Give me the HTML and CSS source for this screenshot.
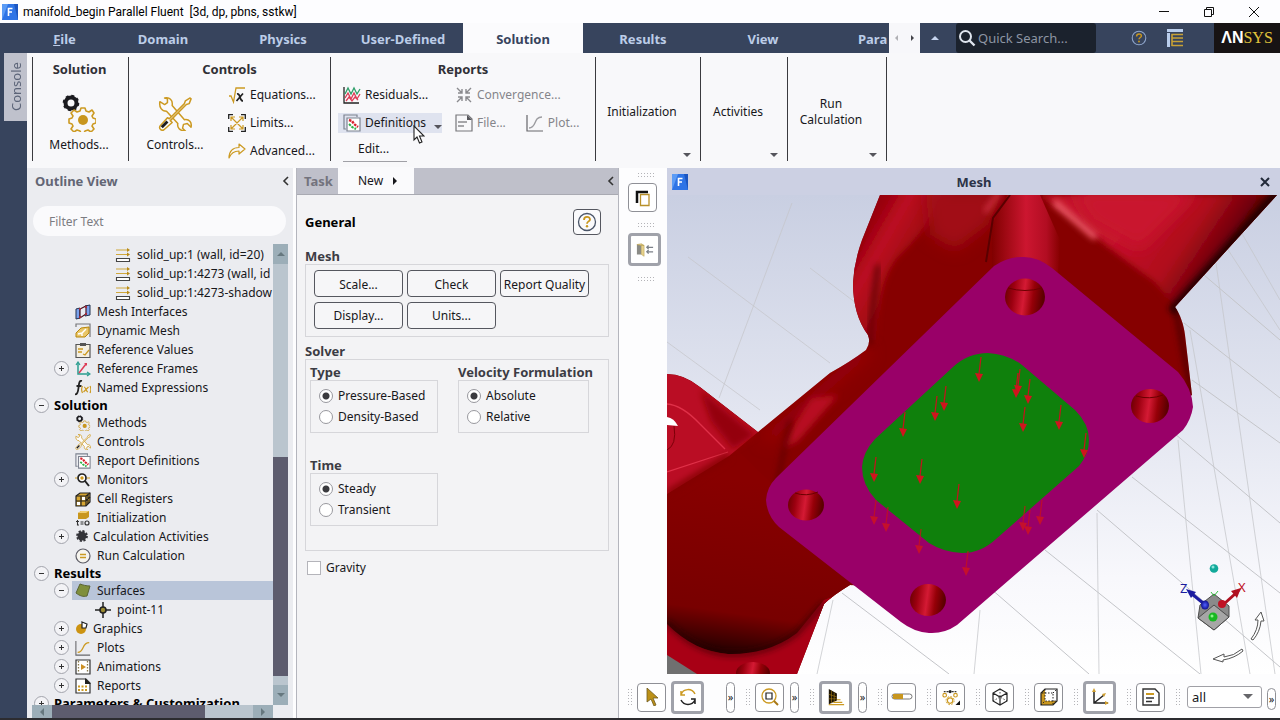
FILE: index.html
```html
<!DOCTYPE html>
<html lang="en">
<head>
<meta charset="utf-8">
<title>manifold_begin Parallel Fluent</title>
<link rel="stylesheet" href="styles.css">
</head>
<body>
<svg class="defs" aria-hidden="true">
  <symbol id="fluent" viewBox="0 0 16 16"><path d="M0 0h16v16H0z" fill="#2e74e6"/><path d="M0 16L6 0H0z" fill="#5b9bf5"/><path d="M16 16L12 0h4z" fill="#1c56c0"/><path d="M6.500 12V4.500h4M6.500 8h3.500" stroke="#fff" stroke-width="1.600" fill="none"/></symbol>
  <symbol id="gears" viewBox="0 0 34 38"><circle cx="9" cy="9" r="5.500" fill="none" stroke="#1b1b1f" stroke-width="4"/><circle cx="9" cy="9" r="7.500" fill="none" stroke="#1b1b1f" stroke-width="1.600" stroke-dasharray="3 2.900"/><path d="M19 14h4l1 3 3 1 3-2 2 3-2 3 1 2 3 1v4l-3 1-1 2 2 3-3 3-3-2-3 1-1 2h-3l-1-2-3-1-3 2-3-3 2-3-1-2-3-1v-4l3-1 1-2-2-3 3-3 3 2 3-1z" fill="none" stroke="#cc9a22" stroke-width="1.600" stroke-linejoin="round"/><circle cx="21" cy="26" r="5" fill="#c8961e"/></symbol>
  <symbol id="tools" viewBox="0 0 36 36"><g fill="#fbfbfc" stroke="#cc9a22" stroke-width="1.600" stroke-linejoin="round"><path d="M2 5l5 3 3-2V2l-3-1c5-1 9 2 8 8l13 15c5-1 8 3 7 8l-4-4-4 1-1 4 3 3c-6 0-9-4-8-8L9 15c-5 0-8-4-7-10z"/><path d="M29 4l5-3 1 1-2 5-3 1L13 25l2 2-9 8c-3 1-5-2-4-4l8-9 2 1L28 7z"/></g><path d="M4 32l6-6" stroke="#1b1b1f" stroke-width="3"/></symbol>
  <symbol id="eq" viewBox="0 0 18 16"><path d="M1 9l2 0 2.500 6L8 1h9" fill="none" stroke="#cc9a22" stroke-width="1.300"/><path d="M9 7c4-1 2 7 6 7M15 6.500L8.500 14" stroke="#222" stroke-width="1.700" fill="none"/></symbol>
  <symbol id="limits" viewBox="0 0 18 18"><path d="M.7 5V.7H5M13 .7h4.300V5M17.300 13v4.300H13M5 17.300H.7V13" fill="none" stroke="#222" stroke-width="1.300"/><path d="M3 3l12 12M15 3L3 15M3 7V3h4M11 3h4v4M15 11v4h-4M7 15H3v-4" fill="none" stroke="#cc9a22" stroke-width="1.200"/></symbol>
  <symbol id="adv" viewBox="0 0 18 16"><path d="M1 15C1 8 5 4.500 11 4.500V1l6 5-6 5V8C7 8 3 10 1 15z" fill="none" stroke="#cc9a22" stroke-width="1.200" stroke-linejoin="round"/></symbol>
  <symbol id="resid" viewBox="0 0 18 18"><path d="M1 1v16h15" fill="none" stroke="#222" stroke-width="1.300"/><path d="M2 8l3-6 3 6 3-6 3 6 3-5" fill="none" stroke="#2f9f6a" stroke-width="1.300"/><path d="M2 12l3-5 3 6 3-6 3 6 3-5M3 15l3-4 3 4 3-4 3 3" fill="none" stroke="#dd3b56" stroke-width="1.300"/></symbol>
  <symbol id="defn" viewBox="0 0 18 18"><path d="M3 15H1V1h13v2" fill="none" stroke="#7d8390" stroke-width="1.200"/><path d="M4 4h13v13H4z" fill="#fff" stroke="#7d8390" stroke-width="1.200"/><path d="M6 6l3 1 2 3 4 3" fill="none" stroke="#d8202c" stroke-width="2.400" stroke-dasharray="2.500 1"/><path d="M6 10l3 3 4 2" fill="none" stroke="#2fb24a" stroke-width="2" stroke-dasharray="2.500 1"/></symbol>
  <symbol id="conv" viewBox="0 0 18 18"><path d="M2 2l5 5M16 2l-5 5M2 16l5-5M16 16l-5-5M7 3v4H3M11 3v4h4M7 15v-4H3M11 15v-4h4" fill="none" stroke="#8a8a8e" stroke-width="1.400"/></symbol>
  <symbol id="file" viewBox="0 0 18 18"><path d="M1 1h12l4 4v12H1z" fill="none" stroke="#77777b" stroke-width="1.200"/><path d="M12 1l5 5h-5z" fill="#55555a"/><path d="M3 8h9M3 12h6" stroke="#8a8a8e" stroke-width="1.600"/></symbol>
  <symbol id="plot" viewBox="0 0 18 18"><path d="M1 1v16h16" fill="none" stroke="#66666a" stroke-width="1.200"/><path d="M3 14c8 0 4-11 13-11" fill="none" stroke="var(--curve, #9c9ca0)" stroke-width="1.400"/></symbol>
  <symbol id="wall" viewBox="0 0 16 16"><path d="M1 3h12M1 7.500h12" stroke="#d0a83c" stroke-width="1.200"/><path d="M12 1l3 2-3 2zM12 5.500l3 2-3 2z" fill="#b98a15"/><path d="M1.500 11.500h13v3h-13z" fill="#fff" stroke="#444" stroke-width="1.100"/></symbol>
  <symbol id="mesh" viewBox="0 0 16 16"><path d="M1 5l4-1v10l-4 1zM10 2l5-1v10l-5 1z" fill="#7aa2ee" stroke="#23324f"/><path d="M5 5l6-3v8l-6 4z" fill="#e8eaf2" stroke="#4a1420" stroke-width="1.200"/><path d="M4 4h2v2H4zM10 2h2v2h-2zM4 12h2v2H4zM10 9h2v2h-2z" fill="#a32c3c"/></symbol>
  <symbol id="dyn" viewBox="0 0 16 16"><path d="M1 4V1h14v13" fill="none" stroke="#77777a" stroke-width="1.200"/><path d="M1 10l5-5 8-1v6l-4 4H1z" fill="#e9c668" stroke="#b8860b"/><path d="M3 11l4-1 4-4M7 10v3" stroke="#fff" stroke-width="1.400" fill="none"/></symbol>
  <symbol id="clip" viewBox="0 0 16 16"><path d="M1 2.500h14v13H1z" fill="#f4efe2" stroke="#555" stroke-width="1.200"/><path d="M5 1h6v3H5z" fill="#555"/><path d="M3 7h5M3 10h4M8 12l2 1 4-5" fill="none" stroke="#cc9a22" stroke-width="1.300"/></symbol>
  <symbol id="frames" viewBox="0 0 16 16"><path d="M3 2v11h11" fill="none" stroke="#2a9d8f" stroke-width="1.500"/><path d="M1 4l2-3 2 3M12 11l3 2-3 2" fill="none" stroke="#2a9d8f" stroke-width="1.200"/><path d="M4 12l7-9" stroke="#dd3b56" stroke-width="1.500"/><path d="M9 2h3v3z" fill="#dd3b56"/></symbol>
  <symbol id="fx" viewBox="0 0 16 16"><path d="M7 1C4 0 4 4 3.500 8S2 15 0 14M1.500 6h5" fill="none" stroke="#222" stroke-width="1.800"/><path d="M7.500 6c-1 2-1 5 0 7M15 6c1 2 1 5 0 7M9 7c2 0 2 5 4 5M13.500 7l-5 5" fill="none" stroke="#cc9a22" stroke-width="1.200"/></symbol>
  <symbol id="mon" viewBox="0 0 16 16"><circle cx="7" cy="6" r="4" fill="#fff" stroke="#222" stroke-width="1.700"/><circle cx="7" cy="6" r="1.700" fill="#d09a1c"/><path d="M10 9l4 5" stroke="#222" stroke-width="2"/><path d="M0 6h2M12 6h3" stroke="#d09a1c"/></symbol>
  <symbol id="cell" viewBox="0 0 16 16"><path d="M1 5l4-3h10v9l-4 4H1z" fill="#d7a632" stroke="#222" stroke-width="1.200"/><path d="M1 5h10v10M11 5l4-3M1 10h10l4-4M6 5v10M13 4v9" fill="none" stroke="#222" stroke-width="1.200"/><path d="M7 6h3v3H7zM2 11h3v3H2z" fill="#fff"/></symbol>
  <symbol id="init" viewBox="0 0 16 16"><path d="M3 3l3-2h8v6l-3 2H3z" fill="#c8961e"/><path d="M3 3h8l3-2H6z" fill="#f0cd70"/><path d="M2.500 10v5h1.500M1 11.500h3M5.500 12h3M5.500 14h3" stroke="#333" stroke-width="1.100" fill="none"/><circle cx="12" cy="13" r="2" fill="none" stroke="#333" stroke-width="1.200"/></symbol>
  <symbol id="calc" viewBox="0 0 16 16"><circle cx="7" cy="7" r="4.500" fill="#333338"/><circle cx="7" cy="7" r="5" fill="none" stroke="#333338" stroke-width="1.800" stroke-dasharray="2.200 1.700"/></symbol>
  <symbol id="run" viewBox="0 0 16 16"><circle cx="8" cy="8" r="7" fill="#f6f4ee" stroke="#5c5c66" stroke-width="1.200"/><path d="M5 6.500h6M5 9.500h6" stroke="#cc9a22" stroke-width="1.600"/></symbol>
  <symbol id="surf" viewBox="0 0 16 16"><path d="M5 1c3 1 6 2 10 2l-3 10c-4 1-7 0-11-3z" fill="#7f8f3c" stroke="#5a6435"/></symbol>
  <symbol id="point" viewBox="0 0 16 16"><circle cx="8" cy="8" r="3" fill="#9a8a30" stroke="#222" stroke-width="1.600"/><path d="M8 0v5M8 11v5M0 8h5M11 8h5" stroke="#222" stroke-width="1.500"/></symbol>
  <symbol id="gfx" viewBox="0 0 16 16"><circle cx="6" cy="8" r="5" fill="#cc9312"/><path d="M7 1l5 2-1 4H7z" fill="#fff" stroke="#222" stroke-width="1.200"/></symbol>
  <symbol id="anim" viewBox="0 0 16 16"><path d="M1 1h14v14H1z" fill="#fff" stroke="#333" stroke-width="1.200"/><path d="M3.500 2v12M12.500 2v12" stroke="#8a7a4a" stroke-width="1.300" stroke-dasharray="1.500 1.500"/><path d="M6 5l5 3-5 3z" fill="#cc8f22"/></symbol>
  <symbol id="rep" viewBox="0 0 16 16"><path d="M1 1h10l4 4v10H1z" fill="#fff" stroke="#333" stroke-width="1.200"/><path d="M10 0l6 6h-6z" fill="#222"/><path d="M3 8.500h10M3 12h10" stroke="#cc9a22" stroke-width="2" stroke-dasharray="2 1.500"/></symbol>
  <symbol id="help" viewBox="0 0 20 20"><circle cx="10" cy="10" r="8.500" fill="none" stroke="var(--ring, #4a5568)" stroke-width="1.300"/><path d="M7 8c0-4 6-4 6-.6 0 2-3 2-3 4.300" fill="none" stroke="#c8961e" stroke-width="1.800"/><circle cx="10" cy="14.300" r="1.200" fill="#c8961e"/></symbol>
</svg>

<header class="titlebar">
  <svg class="app-icon"><use href="#fluent"/></svg>
  <h1 class="title">manifold_begin Parallel Fluent&nbsp; [3d, dp, pbns, sstkw]</h1>
  <button class="win" aria-label="Minimize"><svg viewBox="0 0 12 12"><path d="M1 5.500h10" stroke="#111"/></svg></button>
  <button class="win" aria-label="Restore"><svg viewBox="0 0 12 12"><path d="M1.500 3.500h7v7h-7zM3.500 3.500v-2h7v7h-2" fill="none" stroke="#111"/></svg></button>
  <button class="win" aria-label="Close"><svg viewBox="0 0 12 12"><path d="M1 1l10 10M11 1L1 11" stroke="#111"/></svg></button>
</header>

<nav class="menubar">
  <button class="tab tab-file"><u>F</u>ile</button>
  <button class="tab">Domain</button>
  <button class="tab">Physics</button>
  <button class="tab">User-Defined</button>
  <button class="tab tab-on">Solution</button>
  <button class="tab">Results</button>
  <button class="tab">View</button>
  <button class="tab tab-cut">Para</button>
  <div class="tab-scroll"><button aria-label="Scroll left"><i class="tri left"></i></button><button aria-label="Scroll right"><i class="tri right"></i></button></div>
  <button class="collapse" aria-label="Collapse ribbon"><i class="tri up"></i></button>
  <label class="search"><svg viewBox="0 0 18 18"><circle cx="7.500" cy="7.500" r="5.500" fill="none" stroke="#dfe5ee" stroke-width="2"/><path d="M11.500 11.500l5 5" stroke="#dfe5ee" stroke-width="2.400"/></svg><input type="text" placeholder="Quick Search..." aria-label="Quick Search"></label>
  <button class="bar-btn help-top" aria-label="Help"><svg viewBox="0 0 20 20"><use href="#help"/></svg></button>
  <button class="bar-btn layout-top" aria-label="Layout"><svg viewBox="0 0 16 18"><path d="M0 0h16v3H0zM0 4h3v14H0z" fill="#b9cdeb"/><path d="M4.500 5.500H16M4.500 9H16M4.500 12.500H16M4.500 16.500H16M5 5v12" stroke="#c8a136" stroke-width="1.600"/></svg></button>
  <div class="brand"><b>ΛN</b><span>SYS</span></div>
</nav>

<div class="main">
  <aside class="rail"><button class="console">Console</button></aside>
  <div class="content">
    <section class="ribbon">
      <div class="group">
        <h2>Solution</h2>
        <button class="big"><svg viewBox="0 0 34 38"><use href="#gears"/></svg>Methods...</button>
      </div>
      <div class="group">
        <h2>Controls</h2>
        <div class="controls">
          <button class="big"><svg viewBox="0 0 36 36"><use href="#tools"/></svg>Controls...</button>
          <div class="list">
            <button class="cmd"><svg><use href="#eq"/></svg>Equations...</button>
            <button class="cmd"><svg><use href="#limits"/></svg>Limits...</button>
            <button class="cmd"><svg><use href="#adv"/></svg>Advanced...</button>
          </div>
        </div>
      </div>
      <div class="group">
        <h2>Reports</h2>
        <div class="reports">
          <button class="cmd"><svg><use href="#resid"/></svg>Residuals...</button>
          <button class="cmd off" disabled><svg><use href="#conv"/></svg>Convergence...</button>
          <div class="drop">
            <button class="cmd cmd-on"><svg><use href="#defn"/></svg>Definitions<i class="tri down"></i></button>
            <div class="menu">
              <button class="menu-edit">Edit...</button>
              <button class="menu-new">New<i class="tri right"></i></button>
            </div>
            <svg class="cursor" viewBox="0 0 12 19"><path d="M1 1v14l3-3 2.500 6 2.500-1-2.500-6H11z" fill="#fff" stroke="#222" stroke-width="1.100"/></svg>
          </div>
          <div class="pair">
            <button class="cmd off" disabled><svg><use href="#file"/></svg>File...</button>
            <button class="cmd off" disabled><svg><use href="#plot"/></svg>Plot...</button>
          </div>
        </div>
      </div>
      <div class="group"><button class="wide">Initialization<i class="tri down"></i></button></div>
      <div class="group"><button class="wide">Activities<i class="tri down"></i></button></div>
      <div class="group"><button class="wide">Run<br>Calculation<i class="tri down"></i></button></div>
      <div class="group"></div>
    </section>

    <div class="work">
      <section class="outline">
        <header class="outline-head"><h2>Outline View</h2><button class="fold" aria-label="Collapse"><svg viewBox="0 0 8 10"><path d="M6 1L2 5l4 4" fill="none" stroke="#333" stroke-width="1.600"/></svg></button></header>
        <input class="filter" type="text" placeholder="Filter Text" aria-label="Filter Text">
        <div class="tree-wrap">
          <ul class="tree">
            <li class="deep"><svg><use href="#wall"/></svg>solid_up:1 (wall, id=20)</li>
            <li class="deep"><svg><use href="#wall"/></svg>solid_up:1:4273 (wall, id</li>
            <li class="deep"><svg><use href="#wall"/></svg>solid_up:1:4273-shadow</li>
            <li><span class="no"></span><svg><use href="#mesh"/></svg>Mesh Interfaces</li>
            <li><span class="no"></span><svg><use href="#dyn"/></svg>Dynamic Mesh</li>
            <li><span class="no"></span><svg><use href="#clip"/></svg>Reference Values</li>
            <li><button class="exp plus" aria-label="Expand"></button><svg><use href="#frames"/></svg>Reference Frames</li>
            <li><span class="no"></span><svg><use href="#fx"/></svg>Named Expressions</li>
            <li class="sec"><button class="exp" aria-label="Collapse"></button>Solution</li>
            <li><span class="no"></span><svg viewBox="0 0 34 38"><use href="#gears"/></svg>Methods</li>
            <li><span class="no"></span><svg viewBox="0 0 36 36"><use href="#tools"/></svg>Controls</li>
            <li><span class="no"></span><svg><use href="#defn"/></svg>Report Definitions</li>
            <li><button class="exp plus" aria-label="Expand"></button><svg><use href="#mon"/></svg>Monitors</li>
            <li><span class="no"></span><svg><use href="#cell"/></svg>Cell Registers</li>
            <li><span class="no"></span><svg><use href="#init"/></svg>Initialization</li>
            <li class="tight"><button class="exp plus" aria-label="Expand"></button><svg><use href="#calc"/></svg>Calculation Activities</li>
            <li><span class="no"></span><svg><use href="#run"/></svg>Run Calculation</li>
            <li class="sec"><button class="exp" aria-label="Collapse"></button>Results</li>
            <li class="sel"><button class="exp" aria-label="Collapse"></button><svg><use href="#surf"/></svg>Surfaces</li>
            <li class="sub"><svg><use href="#point"/></svg>point-11</li>
            <li class="tight"><button class="exp plus" aria-label="Expand"></button><svg><use href="#gfx"/></svg>Graphics</li>
            <li class="gold"><button class="exp plus" aria-label="Expand"></button><svg><use href="#plot"/></svg>Plots</li>
            <li><button class="exp plus" aria-label="Expand"></button><svg><use href="#anim"/></svg>Animations</li>
            <li><button class="exp plus" aria-label="Expand"></button><svg><use href="#rep"/></svg>Reports</li>
            <li class="sec"><button class="exp plus" aria-label="Expand"></button>Parameters &amp; Customization</li>
          </ul>
          <div class="vbar"><span class="cap"><i class="tri up"></i></span><span class="track"></span><span class="thumb"></span><span class="rest"></span><span class="cap"><i class="tri down"></i></span></div>
          <div class="hbar"><span class="cap"><i class="tri left"></i></span><span class="thumb"></span><span class="track"></span><span class="cap"><i class="tri right"></i></span></div>
        </div>
      </section>

      <section class="task">
        <header class="task-head"><h2>Task</h2><button class="fold" aria-label="Collapse"><svg viewBox="0 0 8 10"><path d="M6 1L2 5l4 4" fill="none" stroke="#333" stroke-width="1.600"/></svg></button></header>
        <form class="task-body">
          <div class="general"><h3>General</h3><button type="button" class="help-btn" aria-label="Help"><svg viewBox="0 0 20 20"><use href="#help"/></svg></button></div>
          <h4>Mesh</h4>
          <div class="box mesh-box">
            <button type="button">Scale...</button><button type="button">Check</button><button type="button">Report Quality</button>
            <button type="button">Display...</button><button type="button">Units...</button>
          </div>
          <h4 class="solver-title">Solver</h4>
          <div class="box solver-box">
            <fieldset><legend>Type</legend><div class="box opts">
              <label><input type="radio" name="type" checked>Pressure-Based</label>
              <label><input type="radio" name="type">Density-Based</label></div></fieldset>
            <fieldset><legend>Velocity Formulation</legend><div class="box opts">
              <label><input type="radio" name="vel" checked>Absolute</label>
              <label><input type="radio" name="vel">Relative</label></div></fieldset>
            <fieldset><legend>Time</legend><div class="box opts">
              <label><input type="radio" name="time" checked>Steady</label>
              <label><input type="radio" name="time">Transient</label></div></fieldset>
          </div>
          <label class="gravity"><input type="checkbox">Gravity</label>
        </form>
      </section>

      <section class="view">
        <div class="side">
          <i class="dots flat"></i>
          <button class="tool" aria-label="Copy view"><svg viewBox="0 0 18 18"><path d="M3 14V3h11" fill="none" stroke="#111" stroke-width="2.500"/><path d="M6.500 5.500h8.500v11H6.500z" fill="#fff" stroke="#b8902a" stroke-width="1.300"/></svg></button>
          <i class="dots flat"></i>
          <button class="tool on" aria-label="Toggle panel"><svg viewBox="0 0 20 18"><path d="M1 3h5v11H1z" fill="#8b8b86"/><path d="M6 3l3 1v12l-3-2zM1 3l5-1 3 2H6z" fill="#e6d28c" stroke="#b8a052" stroke-width=".6"/><path d="M12 6h7M12 11h7M14 4l-2 2 2 2M14 9l-2 2 2 2" stroke="#7b8088" stroke-width="1.400" fill="none"/></svg></button>
          <i class="dots flat"></i>
        </div>
        <div class="mesh-window">
          <header class="mesh-head"><svg class="app-icon"><use href="#fluent"/></svg><h2>Mesh</h2><button aria-label="Close mesh window"><svg viewBox="0 0 10 10"><path d="M1 1l8 8M9 1L1 9" stroke="#222a3a" stroke-width="2"/></svg></button></header>
          <svg class="scene" viewBox="667 195 613 479" preserveAspectRatio="xMidYMid slice" role="img" aria-label="Manifold mesh">
            <defs>
              <linearGradient id="bg" x1="0" y1="0" x2="0" y2="1"><stop offset="0" stop-color="#c9cfe2"/><stop offset=".45" stop-color="#e2e5f0"/><stop offset=".8" stop-color="#f8f8fc"/><stop offset="1" stop-color="#fff"/></linearGradient>
              <linearGradient id="hole" x1="0" x2="1" y1="0" y2=".12"><stop offset="0" stop-color="#640000"/><stop offset=".25" stop-color="#9c0010"/><stop offset=".52" stop-color="#d41a34"/><stop offset=".75" stop-color="#960008"/><stop offset="1" stop-color="#5c0000"/></linearGradient>
              <linearGradient id="neck" x1="0" x2="1" y1="0" y2="0"><stop offset="0" stop-color="#800000"/><stop offset=".5" stop-color="#cc1630"/><stop offset=".8" stop-color="#b20d22"/><stop offset="1" stop-color="#860000"/></linearGradient>
              <linearGradient id="lobe" x1="855" y1="250" x2="925" y2="290" gradientUnits="userSpaceOnUse"><stop offset="0" stop-color="#98000c"/><stop offset=".25" stop-color="#bc0c22"/><stop offset="1" stop-color="#840000"/></linearGradient>
              <linearGradient id="wing" x1="1120" y1="230" x2="1210" y2="290" gradientUnits="userSpaceOnUse"><stop offset="0" stop-color="#c4122a"/><stop offset=".55" stop-color="#b00a1c"/><stop offset="1" stop-color="#560000"/></linearGradient>
              <linearGradient id="tube" x1="740" y1="480" x2="715" y2="655" gradientUnits="userSpaceOnUse"><stop offset="0" stop-color="#880000"/><stop offset=".75" stop-color="#780000"/><stop offset="1" stop-color="#1c0000"/></linearGradient>
              <radialGradient id="blue"><stop offset="0" stop-color="#5060ff"/><stop offset="1" stop-color="#101090"/></radialGradient>
              <filter id="s3" x="-30%" y="-30%" width="160%" height="160%"><feGaussianBlur stdDeviation="3"/></filter>
              <filter id="s8" x="-40%" y="-40%" width="180%" height="180%"><feGaussianBlur stdDeviation="8"/></filter>
              <clipPath id="body"><path d="M880 195H1277L1175 307C1180 314 1184 325 1185 335L1192 395L1130 440L920 590L850 585Q832 596 824 604L797 674H667V374Q684 374 700 387L758 432L830 373Q850 362 866 350Q871 343 868 335Q853 315 853 283Q854 262 862 240Z"/></clipPath>
              <g id="ar"><path d="M2-24L0-7" stroke="#c8101c" stroke-width="1.200"/><path d="M-4-8L4-7L0 1z" fill="#d0141e"/></g>
            </defs>
            <path d="M667 195h613v479H667z" fill="url(#bg)"/>
            <g stroke="#c4c5c9" fill="none">
              <path d="M688 257L830 363M667 342L760 410M810 268L856 303M792 203L719 398" opacity=".7"/><path d="M1204 275L1280 340M1184 323L1280 398M1192 380L1280 443M1174 433L1280 523M1132 477L1280 593M1097 510L1280 667M1045 550L1200 674M990 588L1089 674M842 593L949 674"/><path d="M1178 440L1201 674M1097 513L1099 674M980 610L974 674M833 600L817 674M1216 263L1275 674M1190 330L1250 674M1240 230L1280 300M1225 245L1280 330" opacity=".75"/>
            </g>
            <g clip-path="url(#body)">
              <path d="M667 195h613v479H667z" fill="#860000"/>
              <path d="M880 185H965L905 250Q878 270 876 340L860 340L845 285Z" fill="url(#lobe)" filter="url(#s3)"/>
              <path d="M925 190H1005L988 225L955 250L930 235Z" fill="#a10713" filter="url(#s8)"/>
              <path d="M1000 192L985 212" stroke="#d93648" stroke-width="4" filter="url(#s3)"/>
              <path d="M878 265Q872 310 870 345" stroke="#520000" stroke-width="4" fill="none" filter="url(#s3)"/>
              <path d="M1008 195H1040L1060 240L1058 275H992V225Z" fill="url(#neck)"/>
              <path d="M1010 195L993 218L986 262" stroke="#5a0000" stroke-width="2" fill="none"/>
              <path d="M1040 195H1290L1175 307L1155 282Q1110 250 1080 222Z" fill="url(#wing)" filter="url(#s3)"/>
              <path d="M1070 190H1200L1140 250L1090 222Z" fill="#c9152d" filter="url(#s8)"/>
              <path d="M1054 202L1096 238" stroke="#f4606e" stroke-width="6" filter="url(#s3)"/>
              <path d="M1280 190L1172 312" stroke="#240000" stroke-width="10" filter="url(#s3)"/>
              <path d="M1175 305L1192 395" stroke="#400000" stroke-width="4" filter="url(#s3)"/>
              <path d="M868 350L765 440" stroke="#9c0710" stroke-width="10" filter="url(#s8)"/>
              <path d="M812 398L838 395L798 441L784 448Q795 420 812 398Z" fill="#b80e22" filter="url(#s3)"/>
              <path d="M790 420L775 495" stroke="#520000" stroke-width="3" filter="url(#s3)"/>
              <path d="M660 470L735 448L850 560L852 590L797 640Q768 656 728 654Q690 650 660 622Z" fill="url(#tube)"/>
              <path d="M667 374Q684 374 700 387L758 432L729 456L667 494Z" fill="#ba0d24"/>
              <path d="M700 390L755 435L733 449L711 421Z" fill="#940008" filter="url(#s3)"/>
              <path d="M667 404Q682 405 700 424L725 449M667 472L728 452" stroke="#df3048" stroke-width="1.300" fill="none"/>
              <path d="M667 417Q674 418 678 426L667 425Z" fill="#fff"/>
              <path d="M674 426Q677 445 667 450" fill="none" stroke="#7c0008"/>
              <path d="M667 494L729 456" stroke="#820000" stroke-width="6" filter="url(#s3)"/>
              <path d="M667 624Q695 652 728 654Q768 655 797 633L824 600L850 590L800 674H667Z" fill="#a80015"/>
              <path d="M667 622Q695 652 728 654Q768 655 797 633L824 603" fill="none" stroke="#280000" stroke-width="3" filter="url(#s3)"/>
              <path d="M667 655L697 674H667Z" fill="#707070"/>
              <ellipse cx="753" cy="673" rx="17" ry="11" fill="url(#hole)"/>
            </g>
            <path d="M994 266Q1009 256 1024 257Q1038 257 1052 268L1178 372Q1192 388 1193 407Q1191 420 1183 430L957 625Q944 634 929 633Q914 632 901 622L779 527Q767 516 766 500Q767 487 776 478Z" fill="#990068"/>
            <path d="M953 367Q968 353 988 353Q1007 354 1022 365L1075 410Q1089 424 1089 440Q1089 454 1079 466L996 539Q981 553 962 553Q943 552 929 543L876 500Q862 485 862 467Q863 452 875 439Z" fill="#0f800c"/>
            <g fill="url(#hole)"><ellipse cx="1025" cy="297" rx="20" ry="18.500"/><ellipse cx="1150" cy="406" rx="19" ry="17"/><ellipse cx="806" cy="505" rx="18" ry="15.500"/><ellipse cx="928" cy="600" rx="18" ry="16"/></g>
            <path d="M1008 288Q1025 293 1042 288M1136 396Q1150 400 1163 395M795 493Q806 497 818 492" stroke="#6a0000" fill="none"/>
            <use href="#ar" x="979" y="381"/><use href="#ar" x="1016" y="397"/><use href="#ar" x="1018" y="393"/><use href="#ar" x="1028" y="403"/><use href="#ar" x="944" y="410"/><use href="#ar" x="935" y="420"/><use href="#ar" x="903" y="436"/><use href="#ar" x="1023" y="431"/><use href="#ar" x="1059" y="429"/><use href="#ar" x="1084" y="457"/><use href="#ar" x="874" y="481"/><use href="#ar" x="920" y="483"/><use href="#ar" x="957" y="508"/>
            <g opacity=".8"><use href="#ar" x="874" y="524"/><use href="#ar" x="886" y="531"/><use href="#ar" x="919" y="553"/><use href="#ar" x="966" y="575"/><use href="#ar" x="1023" y="530"/><use href="#ar" x="1028" y="534"/><use href="#ar" x="1040" y="524"/></g>
            <path d="M1214 594L1229 606V617L1214 630L1198 618L1200 605Z" fill="#8a8a8a" stroke="#4c4c4c"/><path d="M1214 605L1229 617L1214 630L1198 618Z" fill="#a6a6a6" stroke="#4c4c4c"/>
            <path d="M1203 603L1192 594" stroke="#1c1ca0" stroke-width="3"/><path d="M1186 589L1196 592L1191 598Z" fill="#1c1ca0"/><path d="M1225 603L1235 594" stroke="#b01020" stroke-width="3"/><path d="M1241 588L1231 591L1237 598Z" fill="#b01020"/>
            <ellipse cx="1205" cy="605" rx="4" ry="4.500" fill="url(#blue)"/><circle cx="1222" cy="604" r="4" fill="#c01224"/><circle cx="1213" cy="617" r="4.500" fill="#18b822"/><circle cx="1212" cy="616" r="1.500" fill="#8df58c"/><circle cx="1214" cy="568.500" r="4.300" fill="#12a99a"/><circle cx="1213" cy="567" r="1.500" fill="#8be5dc"/>
            <path d="M1211 592L1214 596L1218 591" stroke="#34c040" fill="none"/>
            <text class="axis-z" x="1180" y="593">Z</text><text class="axis-x" x="1238" y="592">X</text>
            <path d="M1251 639Q1258 630 1258 620H1255L1261 612L1264 621H1261Q1260 632 1253 640ZM1242 649Q1234 656 1224 657V654L1213 659L1223 662V660Q1235 658 1243 651Z" fill="#fff" stroke="#555"/>
          </svg>
        </div>
        <div class="toolbar">
          <i class="dots"></i>
          <button class="tool" aria-label="Select"><svg viewBox="0 0 18 18"><path d="M4 0v14l4-3 3 7 2-1-3-7h5z" fill="#bc9118" stroke="#6f5a20" stroke-width=".8"/></svg></button>
          <button class="tool on" aria-label="Rotate"><svg viewBox="0 0 18 18"><path d="M2 7C4 0 13 0 16 6M2 3v4h4" fill="none" stroke="#cc9a22" stroke-width="1.500"/><path d="M2 12c3 6 11 6 14 0M16 16v-5h-4" fill="none" stroke="#222" stroke-width="1.500"/></svg></button>
          <button class="pill first">»</button>
          <i class="dots"></i>
          <button class="tool" aria-label="Zoom"><svg viewBox="0 0 18 18"><circle cx="8" cy="8" r="7" fill="none" stroke="#cc9a22" stroke-width="1.300"/><path d="M5 5h6v6H5z" fill="none" stroke="#222" stroke-width="1.200"/><path d="M13 13l4 4" stroke="#a87817" stroke-width="2"/></svg></button>
          <button class="pill">»</button>
          <i class="dots"></i>
          <button class="tool on" aria-label="Perspective"><svg viewBox="0 0 20 20"><path d="M2 1l9 5v8L2 18z" fill="#1c1405"/><path d="M5 3v14M8 5v11M2 7l9 3M2 12h9" stroke="#b98a15" stroke-width=".6"/><path d="M2 18.500h17M7 16h10M11 13h4" stroke="#cc9a22" stroke-width="1.200"/></svg></button>
          <button class="pill">»</button>
          <i class="dots"></i>
          <button class="tool" aria-label="Transparency"><svg class="w22" viewBox="0 0 22 8"><rect x="1" y="1" width="20" height="5" rx="2.500" fill="#fff" stroke="#777"/><path d="M2 1h10v5H2z" fill="#c8961e"/></svg></button>
          <i class="dots"></i>
          <button class="tool" aria-label="Mesh options"><svg viewBox="0 0 20 18"><path d="M2 3h14" stroke="#333" stroke-width="1.200" stroke-dasharray="2 1"/><g fill="#fff" stroke="#cc9a22" stroke-width="1.300"><circle cx="3" cy="7" r="2"/><circle cx="15" cy="7" r="2"/><circle cx="9" cy="13" r="3"/></g><circle cx="9" cy="13" r="4.500" fill="none" stroke="#cc9a22" stroke-dasharray="2 1.500"/><circle cx="9" cy="3" r="1.800" fill="#222"/><path d="M20 13v5h-5z" fill="#111"/></svg></button>
          <i class="dots"></i>
          <button class="tool" aria-label="Isometric"><svg viewBox="0 0 18 18"><path d="M9 1l7 4v8l-7 4-7-4V5zM2 5l7 4 7-4M9 9v8" fill="none" stroke="#222" stroke-width="1.200"/><path d="M9 1v8M2 13l7-4 7 4" stroke="#222" stroke-width=".8" stroke-dasharray="1.500 1.500" fill="none"/></svg></button>
          <i class="dots"></i>
          <button class="tool" aria-label="Box view"><svg viewBox="0 0 18 18"><path d="M1 5v12h12l4-4V1H5z" fill="#c8961e"/><path d="M5 1h12v12H5z" fill="#fff"/><path d="M1 5v12h12l4-4V1H5z" fill="none" stroke="#222" stroke-width="1.200"/><path d="M2 5h11v11M13 5l4-4M5 1v12M1 17l4-4h12" fill="none" stroke="#222" stroke-dasharray="1.500 1.500"/></svg></button>
          <i class="dots"></i>
          <button class="tool on" aria-label="Axes"><svg viewBox="0 0 18 18"><path d="M3 2v13h14M3 15l10-8" fill="none" stroke="#222" stroke-width="1.500"/><path d="M1 4l2-4 2 4zM14 13l4 2-4 2zM11 6l4-1-2 4z" fill="#d0a030"/></svg></button>
          <i class="dots"></i>
          <button class="tool" aria-label="Report"><svg viewBox="0 0 18 18"><path d="M1 1h12l4 4v12H1z" fill="#fff" stroke="#333" stroke-width="1.400"/><path d="M4 6h8" stroke="#cc9a22" stroke-width="2"/><path d="M4 10h8M4 13.500h6" stroke="#333" stroke-width="1.600"/></svg></button>
          <i class="dots"></i>
          <span class="pick"><select aria-label="Surfaces"><option>all</option></select><i class="tri down"></i></span>
          <button class="pill short">»</button>
        </div>
      </section>
    </div>
  </div>
</div>
<footer class="edge"></footer>
</body>
</html>
```
FILE: styles.css
```css
* { box-sizing: border-box; }
body {
  margin: 0;
  height: 100vh;
  display: flex;
  flex-direction: column;
  overflow: hidden;
  font: 12px/16px "Noto Sans", "Open Sans", sans-serif;
  color: #17171b;
  background: #fdfdfe;
}
button, input, select { font: inherit; color: inherit; }
button { border: 0; padding: 0; background: none; white-space: nowrap; }
h1, h2, h3, h4, ul, fieldset { margin: 0; padding: 0; border: 0; }
fieldset { min-width: 0; }
h2, h3, h4, legend { font-size: 13px; line-height: 16px; font-weight: 700; }
svg { flex: none; display: block; }
.defs { position: absolute; width: 0; height: 0; }

.tri { width: 0; height: 0; border: 4px solid transparent; flex: none; }
.tri.up { border-top: 0; border-bottom-color: currentColor; }
.tri.down { border-bottom: 0; border-top-color: currentColor; }
.tri.left { border-left: 0; border-right-color: currentColor; }
.tri.right { border-right: 0; border-left-color: currentColor; }

/* Title bar */
.titlebar { flex: none; height: 23px; display: flex; align-items: center; padding: 0 4px 0 2px; background: #fdfdff; }
.app-icon { width: 16px; height: 16px; }
.title { flex: 1; margin-left: 5px; font: 400 12px/16px Roboto, "Noto Sans", sans-serif; color: #000; }
.win { width: 45px; display: flex; justify-content: center; }
.win svg { width: 12px; height: 12px; }

/* Menu bar */
.menubar { flex: none; height: 30px; display: flex; background: #37445d; }
.tab { flex: none; width: 120px; padding-top: 1px; font-size: 13px; font-weight: 700; color: #bccde8; }
.tab-file { width: 103px; padding-left: 26px; }
.tab-on { background: #fbfbfd; color: #37445d; }
.tab-cut { flex: 0 1 66px; padding-left: 35px; text-align: left; overflow: hidden; }
.tab-scroll { width: 31px; display: flex; justify-content: space-around; background: #f7f7fa; color: #44444a; }
.tab-scroll .left { color: #b0b0b4; }
.tab-scroll .tri { display: block; border-width: 3px; }
.tab-scroll .left { border-left-width: 0; }
.tab-scroll .right { border-right-width: 0; }
.collapse { width: 36px; padding-left: 11px; color: #c6d4ee; }
.collapse .tri { display: block; }
.search { width: 140px; display: flex; align-items: center; padding-left: 2px; background: #1b222d; border-radius: 3px; }
.search svg { width: 18px; height: 18px; }
.search input { flex: 1; min-width: 0; border: 0; padding: 0 0 0 2px; background: none; font-size: 13px; }
.search input::placeholder { color: #8d95a3; opacity: 1; }
.bar-btn { display: flex; align-items: center; }
.help-top { margin-left: auto; --ring: #8fa6cc; }
.help-top svg { width: 16px; height: 16px; }
.layout-top { margin: 0 31px 0 20px; }
.layout-top svg { width: 16px; height: 18px; }
.brand { width: 66px; display: flex; align-items: center; justify-content: center; background: #171314; color: #fff; font: 700 16px/20px "Liberation Sans", sans-serif; }
.brand span { font: 400 16px/20px "Liberation Serif", serif; color: #e0c23c; }

/* Frame */
.main { flex: 1; min-height: 0; display: flex; }
.rail { flex: none; width: 27px; background: #37445d; padding-left: 4px; }
.console { width: 23px; height: 68px; background: #bfc1cc; color: #5c6478; font-size: 13px; writing-mode: vertical-rl; transform: rotate(180deg); }
.content { flex: 1; min-width: 0; display: flex; flex-direction: column; }
.edge { flex: none; height: 2px; background: #2c2c30; }

/* Ribbon */
.ribbon { flex: none; height: 115px; display: grid; grid-template: 104px / 96px 202px 265px 105px 87px 99px 1fr; padding: 4px 0 0 5px; background: #f8f8fa; }
.group { border-left: 1px solid #3a3a3e; }
.group h2 { margin-top: 4px; text-align: center; color: #303036; }
.group:first-child h2 { padding-right: 2px; }
.big { display: flex; flex-direction: column; align-items: center; gap: 5px; width: 92px; height: 76px; justify-content: flex-end; }
.big svg { width: 34px; height: 38px; }
.controls { display: flex; gap: 7px; }
.controls .big svg { height: 36px; }
.list, .reports { padding-top: 4px; }
.cmd { display: flex; align-items: center; gap: 4px; height: 28px; }
.cmd svg { width: 18px; height: 18px; }
.off { color: #85858a; }
.reports { display: grid; grid-template-columns: 112px auto; justify-content: start; padding-left: 7px; }
.reports .cmd { padding-left: 5px; }
.drop { position: relative; height: 28px; }
.reports .cmd-on { width: 104px; height: 20px; margin-top: 4px; background: #dfe3ef; }
.cmd-on .tri { margin: 8px 0 0 4px; color: #55555c; }
.pair { display: flex; gap: 15px; }
.menu { position: absolute; z-index: 3; left: 0; top: 28px; width: 76px; }
.menu button { display: flex; align-items: center; width: 100%; padding-left: 20px; }
.menu-edit { height: 30px; padding-bottom: 6px; }
.menu-edit::after { content: ""; position: absolute; left: 5px; top: 24px; width: 64px; border-top: 1px solid #a0a0a6; }
.menu .menu-new { height: 27px; background: #fafafc; gap: 10px; }
.cursor { position: absolute; z-index: 4; left: 75px; top: 16px; width: 12px; height: 19px; }
.wide { position: relative; width: 100%; height: 100%; padding: 6px 12px 0 0; }
.wide .tri { position: absolute; right: 9px; bottom: 4px; color: #55555c; }

/* Workspace */
.work { flex: 1; min-height: 0; display: flex; }
.outline { flex: none; width: 266px; display: flex; flex-direction: column; padding-left: 5px; background: #ebecf0; }
.outline-head { display: flex; align-items: center; justify-content: space-between; height: 26px; padding: 0 3px; color: #636675; }
.fold svg { width: 8px; height: 10px; }
.filter { width: 253px; height: 30px; margin: 12px 0 8px 1px; border: 0; border-radius: 15px; padding: 0 16px; background: #fafafc; font-size: 12px; }
.filter::placeholder { color: #7c7c82; opacity: 1; }
.tree-wrap { flex: 1; min-height: 0; display: grid; grid-template: minmax(0, 1fr) 13px / 241px 15px; }
.tree { list-style: none; overflow: hidden; padding-top: 1px; }
.tree li { display: flex; align-items: center; height: 19px; padding-left: 22px; white-space: nowrap; }
.tree svg { width: 16px; height: 16px; margin-right: 6px; }
.tree .deep { padding-left: 83px; }
.tree .sub { padding-left: 63px; }
.tree .tight svg { margin-right: 2px; }
.tree .gold { --curve: #cc9a22; }
.tree .sec { height: 16px; padding-left: 2px; font-size: 13px; font-weight: 700; color: #000; }
.tree .sec .exp { margin-right: 5px; }
.tree .sel { background: linear-gradient(#b9c5d9, #b9c5d9) 40px 0 no-repeat; }
.no { width: 21px; }
.exp { position: relative; flex: none; width: 15px; height: 15px; margin-right: 6px; border: 1px solid #a2a4ac; border-radius: 50%; background: #f3f3f6; }
.exp::before { content: ""; position: absolute; left: 4px; top: 6px; width: 5px; height: 1px; background: #333; }
.exp.plus::after { content: ""; position: absolute; left: 6px; top: 4px; width: 1px; height: 5px; background: #333; }
.vbar, .hbar { display: flex; background: #bac5ce; }
.vbar { flex-direction: column; }
.cap { flex: 0 0 20px; display: flex; align-items: center; justify-content: center; background: #9caeb8; color: #66787f; }
.vbar .track { flex: 193; }
.vbar .thumb { flex: 219; background: #5d5c6e; }
.vbar .rest { flex: 9; }
.hbar .thumb { flex: 153; background: #5d5c6e; }
.hbar .track { flex: 48; }

.task { flex: none; display: flex; flex-direction: column; width: 323px; margin-left: 3px; border: solid #b4b5bd; border-width: 0 1px; background: #f3f3f5; }
.task-head { display: flex; align-items: center; justify-content: space-between; height: 27px; padding: 0 3px 0 7px; background: #bfc0ca; border-bottom: 1px solid #a9aab2; color: #73737d; }
.task-body { padding: 13px 9px 13px 8px; }
.task-body h4, legend { color: #3c3c44; padding: 0; }
legend { white-space: nowrap; }
.general { display: flex; align-items: center; justify-content: space-between; height: 28px; padding-right: 8px; margin-bottom: 12px; color: #000; }
.help-btn { display: flex; align-items: center; justify-content: center; width: 28px; height: 26px; border: 1px solid #55575f; border-radius: 4px; background: #fafafc; }
.help-btn svg { width: 20px; height: 20px; }
.box { border: 1px solid #d6d6da; }
.mesh-box { display: grid; grid-template-columns: repeat(3, 89px); gap: 4px; padding: 5px 8px 7px; height: 73px; }
.mesh-box button { height: 27px; padding-top: 2px; border: 1px solid #55575f; border-radius: 4px; background: #f6f6f8; }
.task-body .solver-title { margin-top: 6px; }
.solver-box { display: grid; grid-template-columns: 128px 131px; column-gap: 20px; row-gap: 24px; padding: 4px 4px 24px; }
.opts { display: flex; flex-direction: column; padding: 4px 8px 5px; }
.opts label { display: flex; align-items: center; height: 21px; }
.opts input { appearance: none; width: 14px; height: 14px; margin: 0 5px 0 0; border: 1px solid #98989e; border-radius: 50%; background: #fff; }
.opts input:checked { background: radial-gradient(circle, #3a3a3e 3px, #fff 4px); }
.gravity { display: flex; align-items: center; margin: 9px 0 0 2px; }
.gravity input { appearance: none; width: 14px; height: 14px; margin: 0 5px 0 0; border: 1px solid #b4b4ba; background: #fff; }

/* Graphics area */
.view { flex: 1; min-width: 0; display: grid; grid-template: minmax(0, 1fr) 44px / 48px minmax(0, 1fr); background: #fdfdfe; }
.side { display: flex; flex-direction: column; align-items: flex-start; padding: 4px 0 0 9px; }
.dots { flex: none; width: 5px; height: 18px; margin-left: 5px; background: radial-gradient(circle, #b4b4b8 1px, transparent 1px) 0 0 / 3px 3px; }
.dots.flat { width: 18px; height: 6px; margin: 0 0 5px 9px; }
.tool { flex: none; display: flex; align-items: center; justify-content: center; width: 29px; height: 29px; border: 1px solid #8f9096; border-radius: 4px; background: #fff; }
.tool.on { width: 33px; height: 33px; border: 3px solid #a0a2aa; }
.tool svg { width: 18px; height: 18px; }
.tool .w22 { width: 22px; height: 8px; }
.side .tool { margin-bottom: 10px; }
.mesh-window { display: flex; flex-direction: column; min-height: 0; }
.mesh-head { flex: none; display: flex; align-items: center; height: 27px; padding: 0 10px 0 5px; background: #ccd0e3; color: #2b3347; }
.mesh-head h2 { flex: 1; text-align: center; }
.mesh-head button svg { width: 10px; height: 10px; }
.scene { flex: 1; min-height: 0; width: 100%; }
.axis-z, .axis-x { font: 13px "Noto Sans", sans-serif; fill: #1c1ca0; }
.axis-x { fill: #c01224; }
.toolbar { grid-column: 1 / -1; display: flex; align-items: center; gap: 5px; padding: 2px 0 0 3px; }
.pill { flex: none; width: 9px; height: 31px; margin-left: 1px; border: 1px solid #8f9096; border-radius: 5px; background: #fff; font-size: 11px; line-height: 16px; display: flex; align-items: center; justify-content: center; }
.pill.first { margin-left: 17px; }
.pill.short { height: 22px; margin: 4px 0 0; }
.pick { position: relative; flex: none; width: 75px; margin-left: 2px; }
.pick select { appearance: none; display: block; width: 100%; height: 22px; border: 1px solid #a0a0a6; border-radius: 3px; padding: 0 4px; background: #fff; font-size: 13px; }
.pick .tri { position: absolute; right: 9px; top: 8px; border-width: 5px 5px 0; color: #66666a; }
```
